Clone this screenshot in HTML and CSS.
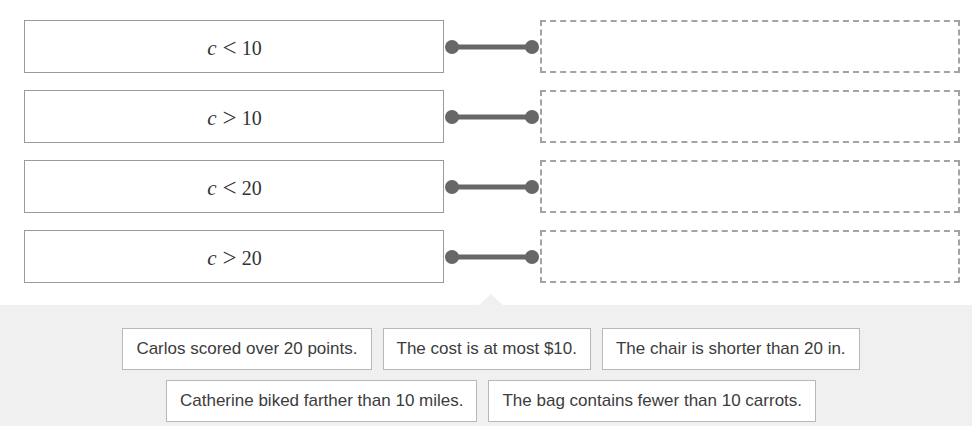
FILE: index.html
```html
<!DOCTYPE html>
<html>
<head>
<meta charset="utf-8">
<link rel="stylesheet" href="styles.css">
</head>
<body>
<div class="matcher">
  <div class="row">
    <div class="term"><span class="math"><i>c</i><span class="rel">&lt;</span>10</span></div>
    <svg class="link" width="96" height="20" viewBox="0 0 96 20"><line x1="8" y1="10" x2="88" y2="10" stroke="#676767" stroke-width="5"/><circle cx="8" cy="10" r="7" fill="#676767"/><circle cx="88" cy="10" r="7" fill="#676767"/></svg>
    <div class="slot"></div>
  </div>
  <div class="row">
    <div class="term"><span class="math"><i>c</i><span class="rel">&gt;</span>10</span></div>
    <svg class="link" width="96" height="20" viewBox="0 0 96 20"><line x1="8" y1="10" x2="88" y2="10" stroke="#676767" stroke-width="5"/><circle cx="8" cy="10" r="7" fill="#676767"/><circle cx="88" cy="10" r="7" fill="#676767"/></svg>
    <div class="slot"></div>
  </div>
  <div class="row">
    <div class="term"><span class="math"><i>c</i><span class="rel">&lt;</span>20</span></div>
    <svg class="link" width="96" height="20" viewBox="0 0 96 20"><line x1="8" y1="10" x2="88" y2="10" stroke="#676767" stroke-width="5"/><circle cx="8" cy="10" r="7" fill="#676767"/><circle cx="88" cy="10" r="7" fill="#676767"/></svg>
    <div class="slot"></div>
  </div>
  <div class="row">
    <div class="term"><span class="math"><i>c</i><span class="rel">&gt;</span>20</span></div>
    <svg class="link" width="96" height="20" viewBox="0 0 96 20"><line x1="8" y1="10" x2="88" y2="10" stroke="#676767" stroke-width="5"/><circle cx="8" cy="10" r="7" fill="#676767"/><circle cx="88" cy="10" r="7" fill="#676767"/></svg>
    <div class="slot"></div>
  </div>
</div>
<div class="bank">
  <div class="notch"></div>
  <div class="chips">
    <div class="chip">Carlos scored over 20 points.</div>
    <div class="chip">The cost is at most $10.</div>
    <div class="chip">The chair is shorter than 20 in.</div>
    <div class="chip">Catherine biked farther than 10 miles.</div>
    <div class="chip">The bag contains fewer than 10 carrots.</div>
  </div>
</div>
</body>
</html>
```
FILE: styles.css
```css
html, body {
  margin: 0;
  padding: 0;
  background: #fff;
}
body {
  font-family: "Liberation Sans", Arial, sans-serif;
  width: 972px;
  height: 426px;
  overflow: hidden;
}
.matcher {
  padding: 20px 0 0 24px;
  display: flex;
  flex-direction: column;
  gap: 17px;
}
.row {
  display: flex;
  align-items: center;
}
.term {
  box-sizing: border-box;
  width: 420px;
  height: 53px;
  border: 1px solid #9a9a9a;
  display: flex;
  align-items: center;
  justify-content: center;
}
.math {
  font-family: "Liberation Serif", serif;
  font-size: 20px;
  color: #333;
  display: flex;
  align-items: baseline;
  line-height: 1;
  padding-left: 1px;
}
.math i {
  font-size: 21px;
}
.rel {
  font-size: 25px;
  margin: 0 5px 0 6px;
  position: relative;
  top: 1px;
}
.link {
  display: block;
  flex: none;
}
.slot {
  box-sizing: border-box;
  width: 420px;
  height: 53px;
  border: 2px dashed #a3a3a3;
}
.bank {
  position: relative;
  margin-top: 22px;
  background: #f0f0f0;
  height: 121px;
  padding-top: 23px;
  box-sizing: border-box;
}
.notch {
  position: absolute;
  left: 479px;
  top: -11px;
  width: 0;
  height: 0;
  border-left: 12px solid transparent;
  border-right: 12px solid transparent;
  border-bottom: 11px solid #f0f0f0;
}
.chips {
  display: flex;
  flex-wrap: wrap;
  justify-content: center;
  gap: 10px 11px;
  width: 972px;
  box-sizing: border-box;
  padding: 0 100px 0 110px;
}
.chip {
  box-sizing: border-box;
  height: 42px;
  padding: 0 13px;
  background: #fff;
  border: 1px solid #b8b8b8;
  color: #3c3c3c;
  font-size: 17px;
  display: flex;
  align-items: center;
}
```
